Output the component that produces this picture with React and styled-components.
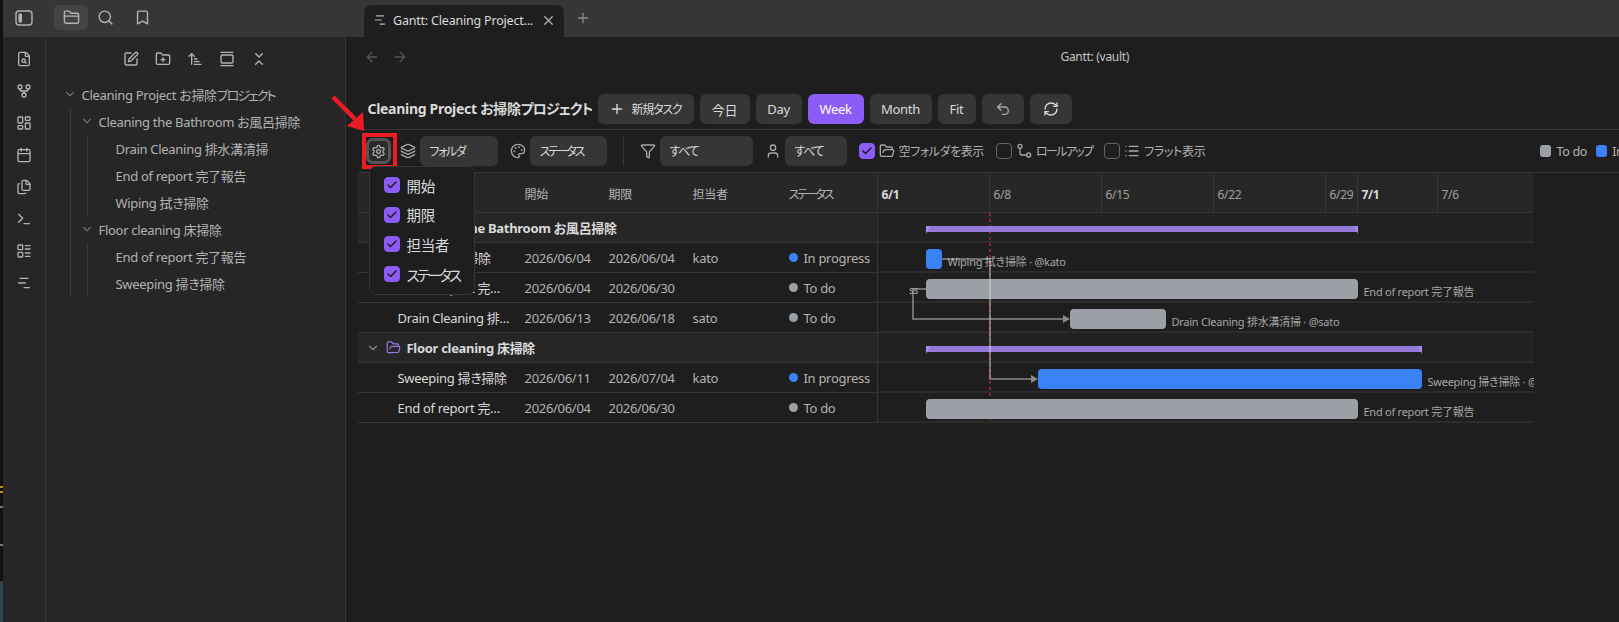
import React from 'react'
import styled, {createGlobalStyle} from 'styled-components'
import {
  Bookmark, Calendar, Check, ChartNoAxesGantt, ChevronDown, ChevronsDownUp, Files, FileSearch, Filter,
  FolderClosed, FolderOpen, FolderPlus, GalleryVertical, GitFork, Layers, LayoutDashboard, LayoutList, List,
  ArrowLeft, ArrowRight, ArrowUpNarrowWide, Palette, Plus, RefreshCw, Search, Settings, SquarePen, Terminal, Undo2, User, X,
} from 'lucide-react'

const FONT = `"Noto Sans", "Noto Sans CJK JP", sans-serif`
const DAY = 16

const GlobalStyle = createGlobalStyle`
  html, body { margin: 0; padding: 0; background: #1e1e1e; }
  body {
    font-family: ${FONT};
    font-size: 13px;
    letter-spacing: -0.3px;
    font-feature-settings: "palt";
    color: #dadada;
  }
  * { box-sizing: border-box; }
`

const Screen = styled.div`
  display: flex;
  width: 1619px;
  height: 622px;
  overflow: hidden;
`

const EdgeStrip = styled.div`
  width: 2.5px;
  flex: none;
  background: linear-gradient(
    #111 0 486px, #b8920f 486px 488px, #111 488px 491px, #b8920f 491px 493px, #111 493px 506px, #777 506px 508px,
    #111 508px 544px, #777 544px 546px, #111 546px 581px, #2f4550 581px
  );
`

const Window = styled.div`
  flex: 1;
  display: flex;
  flex-direction: column;
  min-width: 0;
`

const TitleBar = styled.div`
  height: 37px;
  flex: none;
  display: flex;
  background: #363636;
`

const SideTabs = styled.div`
  width: 343.5px;
  flex: none;
  display: flex;
  align-items: flex-start;
  padding: 5px 0 0 4.5px;
  color: #b3b3b3;
`

const TopIcon = styled.div`
  width: ${p => p.$width || 34}px;
  height: 25px;
  margin-right: ${p => p.$gap || 0}px;
  display: flex;
  align-items: center;
  justify-content: center;
  border-radius: 5px;
  background: ${p => (p.$active ? '#444444' : 'transparent')};
`

const Tab = styled.div`
  width: 200px;
  height: 32px;
  margin: 5px 0 0 18px;
  padding: 0 8.5px 2px 9px;
  display: flex;
  align-items: center;
  gap: 6px;
  border-radius: 7px 7px 0 0;
  background: #1e1e1e;
  color: #dadada;
`

const TabTitle = styled.span`
  flex: 1;
  min-width: 0;
  font-size: 12.5px;
  letter-spacing: -0.2px;
  white-space: nowrap;
`

const NewTab = styled.div`
  margin: 10px 0 0 11px;
  color: #8a8a8a;
`

const Body = styled.div`
  flex: 1;
  display: flex;
  min-height: 0;
`

const Ribbon = styled.div`
  width: 43px;
  flex: none;
  padding-top: 6px;
  display: flex;
  flex-direction: column;
  align-items: center;
  background: #262626;
  border-right: 1px solid #363636;
  color: #b3b3b3;
`

const RibbonIcon = styled.div`
  width: 32px;
  height: 32px;
  display: flex;
  align-items: center;
  justify-content: center;
`

const FilePanel = styled.div`
  width: 300px;
  flex: none;
  background: #262626;
  border-right: 1px solid #363636;
  color: #b3b3b3;
`

const PanelNav = styled.div`
  height: 43.5px;
  display: flex;
  align-items: center;
  justify-content: center;
`

const NavIcon = styled.div`
  width: 32px;
  display: flex;
  justify-content: center;
`

const Tree = styled.div`
  padding-left: 17px;
`

const TreeRow = styled.div`
  height: 27px;
  display: flex;
  align-items: center;
  gap: 5px;
  white-space: nowrap;
  padding-left: ${p => (p.$leaf ? 28 : 0)}px;
`

const TreeChevron = styled(ChevronDown)`
  width: 14px;
  height: 14px;
  flex: none;
  color: #6e6e6e;
`

const TreeChildren = styled.div`
  margin-left: 7px;
  padding-left: ${p => p.$inset}px;
  border-left: 1px solid #3c3c3c;
`

const Main = styled.div`
  flex: 1;
  min-width: 0;
  display: flex;
  flex-direction: column;
  background: #1e1e1e;
`

const ViewHeader = styled.div`
  height: 40px;
  flex: none;
  display: flex;
  align-items: center;
  padding-left: 18px;
  gap: 12px;
  color: #555555;
`

const ViewTitle = styled.div`
  margin-left: 641px;
  margin-top: -2px;
  font-size: 12px;
  color: #c4c4c4;
`

const Gantt = styled.div`
  padding: 17px 0 0 12px;
`

const TitleRow = styled.div`
  height: 36px;
  display: flex;
  gap: 6px;
  padding-left: 10px;
  border-bottom: 1px solid #363636;
  align-items: flex-start;
`

const ProjectTitle = styled.h1`
  margin: 0;
  width: 224px;
  flex: none;
  height: 30px;
  line-height: 30px;
  font-size: 14px;
  font-weight: 700;
  color: #dadada;
  white-space: nowrap;
`

/* kana in the reference is set much narrower than the Noto face, so it gets its own tracking */
const Kana = styled.span`
  letter-spacing: ${p => p.$track}px;
`

const Button = styled.button`
  width: ${p => p.$width}px;
  height: 30px;
  flex: none;
  display: flex;
  align-items: center;
  justify-content: center;
  gap: 6px;
  padding: 0;
  border: 0;
  border-radius: 6px;
  background: ${p => (p.$active ? '#8b5cf6' : '#363636')};
  color: ${p => (p.$active ? '#ffffff' : '#dadada')};
  font: inherit;
  font-size: ${p => p.$size || 13}px;
  letter-spacing: inherit;
  font-feature-settings: inherit;
`

const Toolbar = styled.div`
  height: 43px;
  display: flex;
  align-items: center;
  padding-left: 8px;
  border-bottom: 1px solid #363636;
  white-space: nowrap;
`

const GearHolder = styled.div`
  position: relative;
  flex: none;
  margin-right: 9px;
`

const GearButton = styled.div`
  width: 25px;
  height: 26px;
  display: flex;
  align-items: center;
  justify-content: center;
  border-radius: 7px;
  border: 3px solid #555555;
  background: #2a2a2a;
  color: #b3b3b3;
`

const RedBox = styled.div`
  position: absolute;
  left: -4px;
  top: -5px;
  width: 35px;
  height: 36px;
  border: 4px solid #ed1c24;
`

const RedArrow = styled.svg`
  position: absolute;
  left: -38px;
  top: -47px;
  width: 40px;
  height: 44px;
`

const SettingsMenu = styled.div`
  position: absolute;
  z-index: 10;
  left: 3px;
  top: 28px;
  width: 106px;
  height: 129px;
  padding: 10px 14px;
  display: flex;
  flex-direction: column;
  gap: 13.7px;
  border: 1px solid #363636;
  border-radius: 7px;
  background: #1e1e1e;
`

const MenuItem = styled.label`
  height: 16px;
  display: flex;
  align-items: center;
  gap: 7px;
  font-size: 14.5px;
  color: #dadada;
`

const Box = styled.span`
  width: 16px;
  height: 16px;
  flex: none;
  display: flex;
  align-items: center;
  justify-content: center;
  border-radius: 4px;
  border: 1px solid ${p => (p.$on ? '#8b5cf6' : '#666666')};
  background: ${p => (p.$on ? '#8b5cf6' : 'transparent')};
  color: #1e1e1e;
`

const ToolIcon = styled.span`
  display: flex;
  flex: none;
  margin: 0 ${p => p.$right ?? 4}px 0 ${p => p.$left ?? 0}px;
  color: #a8a8a8;
`

const Select = styled.select`
  width: ${p => p.$width}px;
  height: 30px;
  flex: none;
  padding: 0 10px;
  appearance: none;
  border: 0;
  border-radius: 6px;
  background: #363636;
  color: #dadada;
  font: inherit;
  font-size: 12px;
  letter-spacing: ${p => p.$track}px;
  font-feature-settings: inherit;
`

const Divider = styled.div`
  width: 1px;
  height: 30px;
  flex: none;
  margin: 0 16px;
  background: #363636;
`

const Toggle = styled.label`
  display: flex;
  flex: none;
  align-items: center;
  gap: 4px;
  margin-left: ${p => p.$left}px;
  font-size: 12px;
  color: #b3b3b3;
`

const Legend = styled.div`
  margin-left: 335px;
  flex: none;
  display: flex;
  align-items: center;
  gap: 5px;
  font-size: 12.5px;
  color: #b3b3b3;
`

const Swatch = styled.span`
  width: 11px;
  height: 12px;
  margin-left: ${p => p.$left || 0}px;
  flex: none;
  border-radius: 3px;
  background: ${p => p.$color};
`

const ChartBody = styled.div`
  position: relative;
  width: 1176px;
  overflow: hidden;
`

const Row = styled.div`
  display: flex;
  height: 30px;
  background: ${p => (p.$tone === 'header' ? '#272727' : p.$tone === 'group' ? '#262626' : 'transparent')};
`

const HeaderRow = styled(Row)`
  height: 40px;
`

const LeftCell = styled.div`
  width: 520px;
  flex: none;
  display: grid;
  grid-template-columns: 167px 84px 84px 96px 1fr;
  align-items: center;
  padding-top: ${p => (p.$head ? 2 : 0)}px;
  border-right: 1px solid #363636;
  border-bottom: 1px solid #363636;
  color: #b3b3b3;
`

const TimelineCell = styled.div`
  flex: 1;
  min-width: 0;
  border-bottom: 2px solid #2c2c2c;
  background: ${p => (p.$group ? '#222222' : 'transparent')};
`

const HeaderTicks = styled.div`
  flex: 1;
  min-width: 0;
  display: flex;
  border-bottom: 1px solid #363636;
`

const Tick = styled.div`
  flex: none;
  padding: 13px 0 0 4px;
  border-right: 1px solid #363636;
  font-size: 12px;
  font-weight: ${p => (p.$strong ? 700 : 400)};
  color: ${p => (p.$strong ? '#dadada' : '#a0a0a0')};
  &:last-child { border-right: 0; }
`

const HeadLabel = styled.span`
  font-size: 12px;
`

const TaskName = styled.div`
  padding: 0 14px 0 40px;
  color: #dadada;
  white-space: nowrap;
  overflow: hidden;
  text-overflow: ellipsis;
`

const GroupName = styled.div`
  grid-column: 1 / -1;
  display: flex;
  align-items: center;
  gap: 6px;
  padding-left: 8px;
  font-weight: 700;
  color: #dadada;
`

const Status = styled.div`
  display: flex;
  align-items: center;
  gap: 6px;
`

const Dot = styled.span`
  width: 9px;
  height: 9px;
  border-radius: 50%;
  background: ${p => p.$color};
`

const TaskBar = styled.div`
  position: absolute;
  z-index: 2;
  height: 20px;
  border-radius: 4px;
  background: ${p => p.$color};
`

const GroupBar = styled.div`
  position: absolute;
  z-index: 2;
  height: 6px;
  background: #9479d9;
  &::before, &::after {
    content: '';
    position: absolute;
    top: 0;
    border-top: 8px solid #a78bfa;
  }
  &::before { left: 0; border-right: 4px solid transparent; }
  &::after { right: 0; border-left: 4px solid transparent; }
`

const BarLabel = styled.div`
  position: absolute;
  z-index: 2;
  font-size: 11px;
  letter-spacing: -0.25px;
  line-height: 14px;
  color: #a6a6a6;
  white-space: nowrap;
`

const TodayLine = styled.div`
  position: absolute;
  z-index: 1;
  top: 0;
  bottom: 0;
  left: 631px;
  width: 2px;
  background: repeating-linear-gradient(#7a2c2c 0 3px, transparent 3px 6px);
`

const Links = styled.svg`
  position: absolute;
  z-index: 3;
  left: 520px;
  top: 0;
  width: 656px;
  height: 210px;
  pointer-events: none;
`

const AreaWrap = styled.div`
  position: relative;
`

const BarsLayer = styled.div`
  position: absolute;
  left: 520px;
  top: 0;
  width: 656px;
  height: 210px;
  overflow: hidden;
`

const TICKS = [
  {label: '6/1', days: 7, strong: true},
  {label: '6/8', days: 7},
  {label: '6/15', days: 7},
  {label: '6/22', days: 7},
  {label: '6/29', days: 2},
  {label: '7/1', days: 5, strong: true},
  {label: '7/6', days: 6},
]

const COLORS = {todo: '#9aa0a6', progress: '#3b82f6'}

const ROWS = [
  {group: 'Cleaning the Bathroom お風呂掃除', from: 3, to: 30},
  {name: 'Wiping 拭き掃除', start: '2026/06/04', due: '2026/06/04', who: 'kato', status: 'progress', from: 3, to: 4, label: 'Wiping 拭き掃除 · @kato'},
  {name: 'End of report 完了報告', start: '2026/06/04', due: '2026/06/30', status: 'todo', from: 3, to: 30, label: 'End of report 完了報告'},
  {name: 'Drain Cleaning 排水溝清掃', start: '2026/06/13', due: '2026/06/18', who: 'sato', status: 'todo', from: 12, to: 18, label: 'Drain Cleaning 排水溝清掃 · @sato'},
  {group: 'Floor cleaning 床掃除', from: 3, to: 34},
  {name: 'Sweeping 掃き掃除', start: '2026/06/11', due: '2026/07/04', who: 'kato', status: 'progress', from: 10, to: 34, label: 'Sweeping 掃き掃除 · @kato'},
  {name: 'End of report 完了報告', start: '2026/06/04', due: '2026/06/30', status: 'todo', from: 3, to: 30, label: 'End of report 完了報告'},
]

const STATUS_TEXT = {todo: 'To do', progress: 'In progress'}

const MENU_ITEMS = [
  {label: '開始', track: -0.3},
  {label: '期限', track: -0.3},
  {label: '担当者', track: -0.3},
  {label: 'ステータス', track: -2.7},
]

const RollupIcon = () => (
  <svg width="16" height="16" viewBox="0 0 24 24" fill="none" stroke="currentColor" strokeWidth="2">
    <circle cx="6" cy="5" r="3" />
    <circle cx="19" cy="18" r="3" />
    <path d="M6 8v7a3 3 0 0 0 3 3h7" />
  </svg>
)

const SidebarIcon = () => (
  <svg width="18" height="18" viewBox="0 0 18 18" fill="none">
    <rect x="1" y="2" width="16" height="14" rx="3" stroke="currentColor" strokeWidth="1.4" />
    <rect x="3.5" y="4.5" width="3.5" height="9" rx="1" fill="currentColor" />
  </svg>
)

const Chk = ({on}) => <Box $on={on}>{on && <Check size={12} strokeWidth={3} />}</Box>

const TimelineRow = ({row, index}) => {
  const left = row.from * DAY
  const width = (row.to - row.from) * DAY
  if (row.group) {
    return <GroupBar style={{left, width, top: index * 30 + 13}} />
  }
  return (
    <>
      <TaskBar $color={COLORS[row.status]} style={{left, width, top: index * 30 + 6}} />
      <BarLabel style={{left: left + width + 6, top: index * 30 + 12}}>{row.label}</BarLabel>
    </>
  )
}

const TimelineArea = () => (
  <AreaWrap>
    {ROWS.map((row, i) => (
      <Row key={i} $tone={row.group ? 'group' : undefined}>
        <LeftCell>
          {row.group ? (
            <GroupName>
              <ChevronDown size={14} color="#8a8a8a" />
              <FolderOpen size={15} color="#9479d9" />
              {row.group}
            </GroupName>
          ) : (
            <>
              <TaskName>{row.name}</TaskName>
              <span>{row.start}</span>
              <span>{row.due}</span>
              <span>{row.who}</span>
              <Status>
                <Dot $color={COLORS[row.status]} />
                {STATUS_TEXT[row.status]}
              </Status>
            </>
          )}
        </LeftCell>
        <TimelineCell $group={!!row.group} />
      </Row>
    ))}
    <TodayLine />
    <BarsLayer>
      {ROWS.map((row, i) => <TimelineRow key={i} row={row} index={i} />)}
    </BarsLayer>
    <Links viewBox="0 0 656 210">
      <g fill="none" stroke="rgba(225,225,225,0.55)" strokeWidth="1.5">
        <path d="M64 46H112V166H153" />
        <path d="M48 76H35V106H185" />
      </g>
      <g fill="rgba(225,225,225,0.55)">
        <path d="M160 166L153 162V170Z" />
        <path d="M192 106L185 102V110Z" />
      </g>
      <text x="31" y="81" fontSize="10" fill="#b3b3b3">ss</text>
    </Links>
  </AreaWrap>
)

export default function App() {
  return (
    <Screen>
      <GlobalStyle />
      <EdgeStrip />
      <Window>
        <TitleBar>
          <SideTabs>
            <TopIcon $width={34} $gap={13}><SidebarIcon /></TopIcon>
            <TopIcon $active><FolderClosed size={17} /></TopIcon>
            <TopIcon $gap={3}><Search size={17} /></TopIcon>
            <TopIcon><Bookmark size={17} /></TopIcon>
          </SideTabs>
          <Tab>
            <ChartNoAxesGantt size={14} color="#b3b3b3" />
            <TabTitle>Gantt: Cleaning Project...</TabTitle>
            <X size={15} color="#b3b3b3" />
          </Tab>
          <NewTab><Plus size={16} /></NewTab>
        </TitleBar>
        <Body>
          <Ribbon>
            {[FileSearch, GitFork, LayoutDashboard, Calendar, Files, Terminal, LayoutList, ChartNoAxesGantt].map((Icon, i) => (
              <RibbonIcon key={i}><Icon size={16} /></RibbonIcon>
            ))}
          </Ribbon>
          <FilePanel>
            <PanelNav>
              {[SquarePen, FolderPlus, ArrowUpNarrowWide, GalleryVertical, ChevronsDownUp].map((Icon, i) => (
                <NavIcon key={i}><Icon size={16} /></NavIcon>
              ))}
            </PanelNav>
            <Tree>
              <TreeRow><TreeChevron /><span>Cleaning Project お掃除<Kana $track={-2}>プロジェクト</Kana></span></TreeRow>
              <TreeChildren $inset={9}>
                <TreeRow><TreeChevron />Cleaning the Bathroom お風呂掃除</TreeRow>
                <TreeChildren $inset={0}>
                  <TreeRow $leaf>Drain Cleaning 排水溝清掃</TreeRow>
                  <TreeRow $leaf>End of report 完了報告</TreeRow>
                  <TreeRow $leaf>Wiping 拭き掃除</TreeRow>
                </TreeChildren>
                <TreeRow><TreeChevron />Floor cleaning 床掃除</TreeRow>
                <TreeChildren $inset={0}>
                  <TreeRow $leaf>End of report 完了報告</TreeRow>
                  <TreeRow $leaf>Sweeping 掃き掃除</TreeRow>
                </TreeChildren>
              </TreeChildren>
            </Tree>
          </FilePanel>
          <Main>
            <ViewHeader>
              <ArrowLeft size={16} />
              <ArrowRight size={16} />
              <ViewTitle>Gantt: (vault)</ViewTitle>
            </ViewHeader>
            <Gantt>
              <TitleRow>
                <ProjectTitle>Cleaning Project お掃除<Kana $track={-1}>プロジェクト</Kana></ProjectTitle>
                <Button $width={96} $size={12}><Plus size={16} /><Kana $track={-1.2}>新規タスク</Kana></Button>
                <Button $width={50}>今日</Button>
                <Button $width={46}>Day</Button>
                <Button $width={56} $active>Week</Button>
                <Button $width={62}>Month</Button>
                <Button $width={38}>Fit</Button>
                <Button $width={42}><Undo2 size={16} color="#a8a8a8" /></Button>
                <Button $width={42}><RefreshCw size={16} /></Button>
              </TitleRow>
              <Toolbar>
                <GearHolder>
                  <GearButton><Settings size={15} /></GearButton>
                  <RedBox />
                  <RedArrow viewBox="0 0 40 44">
                    <path d="M5 6 L27 28" stroke="#ed1c24" strokeWidth="4.5" fill="none" />
                    <path d="M36 40 L19 35 L35 21 Z" fill="#ed1c24" />
                  </RedArrow>
                  <SettingsMenu>
                    {MENU_ITEMS.map(item => (
                      <MenuItem key={item.label}><Chk on /><Kana $track={item.track}>{item.label}</Kana></MenuItem>
                    ))}
                  </SettingsMenu>
                </GearHolder>
                <ToolIcon><Layers size={16} /></ToolIcon>
                <Select $width={78} $track={-1.5}><option>フォルダ</option></Select>
                <ToolIcon $left={12} $right={4}><Palette size={16} /></ToolIcon>
                <Select $width={77} $track={-2.2}><option>ステータス</option></Select>
                <Divider />
                <ToolIcon $right={4}><Filter size={16} /></ToolIcon>
                <Select $width={93} $track={-1.4}><option>すべて</option></Select>
                <ToolIcon $left={12} $right={4}><User size={16} /></ToolIcon>
                <Select $width={62} $track={-1.4}><option>すべて</option></Select>
                <Toggle $left={12}><Chk on /><ToolIcon $right={0}><FolderOpen size={16} /></ToolIcon><Kana $track={-0.4}>空フォルダを表示</Kana></Toggle>
                <Toggle $left={12}><Chk /><ToolIcon $right={0}><RollupIcon /></ToolIcon><Kana $track={-1.7}>ロールアップ</Kana></Toggle>
                <Toggle $left={12}><Chk /><ToolIcon $right={0}><List size={16} /></ToolIcon><Kana $track={-0.3}>フラット表示</Kana></Toggle>
                <Legend>
                  <Swatch $color={COLORS.todo} />To do
                  <Swatch $color={COLORS.progress} $left={4} />In progress
                </Legend>
              </Toolbar>
              <ChartBody>
                <HeaderRow $tone="header">
                  <LeftCell $head>
                    <span />
                    <HeadLabel>開始</HeadLabel>
                    <HeadLabel>期限</HeadLabel>
                    <HeadLabel>担当者</HeadLabel>
                    <HeadLabel><Kana $track={-2.2}>ステータス</Kana></HeadLabel>
                  </LeftCell>
                  <HeaderTicks>
                    {TICKS.map(tick => (
                      <Tick key={tick.label} $strong={tick.strong} style={{width: tick.days * DAY}}>{tick.label}</Tick>
                    ))}
                  </HeaderTicks>
                </HeaderRow>
                <TimelineArea />
              </ChartBody>
            </Gantt>
          </Main>
        </Body>
      </Window>
    </Screen>
  )
}
